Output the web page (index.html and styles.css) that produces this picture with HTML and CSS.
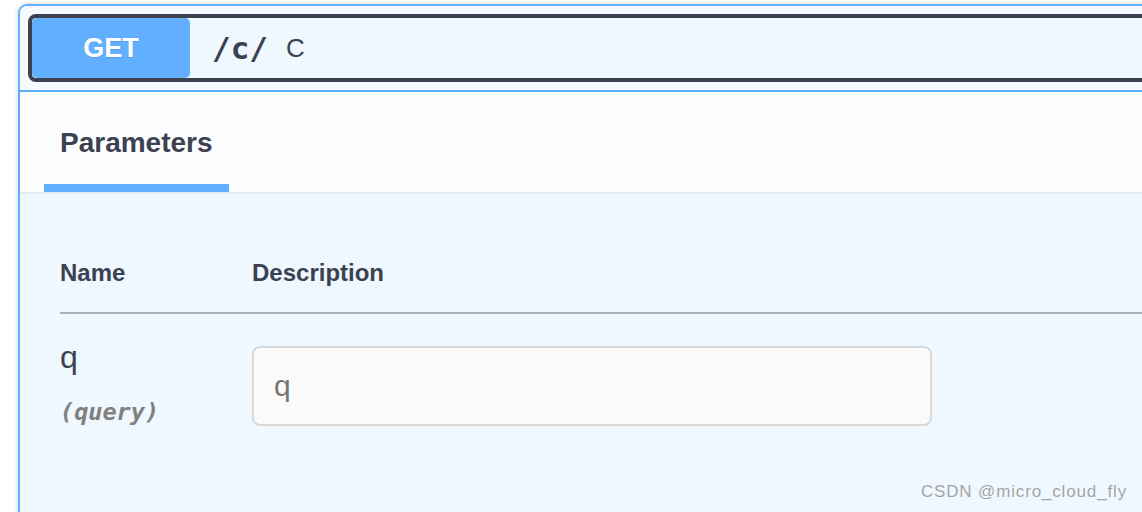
FILE: index.html
```html
<!DOCTYPE html>
<html lang="en">
<head>
<meta charset="utf-8">
<title>GET /c/</title>
<link rel="stylesheet" href="styles.css">
</head>
<body>
<div class="page">
  <div class="opblock">
    <div class="summary">
      <div class="summary-inner">
        <span class="method">GET</span>
        <span class="path">/c/</span>
        <span class="desc">C</span>
      </div>
    </div>
    <div class="section-header">
      <div class="tab"><h4 class="tab-title">Parameters</h4></div>
    </div>
    <div class="params">
      <div class="row row-head">
        <div class="col-name">Name</div>
        <div class="col-desc">Description</div>
      </div>
      <div class="row row-param">
        <div class="col-name">
          <div class="param-name">q</div>
          <div class="param-in">(query)</div>
        </div>
        <div class="col-desc col-input">
          <input class="param-input" type="text" placeholder="q">
        </div>
      </div>
    </div>
  </div>
  <div class="watermark">CSDN @micro_cloud_fly</div>
</div>
</body>
</html>
```

FILE: styles.css
```css
html, body {
  margin: 0;
  padding: 0;
  overflow: hidden;
  background: #ffffff;
  width: 1142px;
  height: 512px;
}

.page {
  position: relative;
  width: 1142px;
  height: 512px;
  overflow: hidden;
  padding: 4px 0 0 18px;
  box-sizing: border-box;
  font-family: "Liberation Sans", Arial, sans-serif;
  color: #3b4151;
}

.opblock {
  width: 1200px;
  min-height: 620px;
  border: 2px solid #61affe;
  border-radius: 9px;
  background: #eff7ff;
  box-shadow: 0 0 5px rgba(0, 0, 0, 0.18);
  box-sizing: border-box;
}

.summary {
  padding: 8px;
  background: #f6faff;
  border-bottom: 2px solid #61affe;
  border-radius: 7px 7px 0 0;
}

.summary-inner {
  display: flex;
  align-items: center;
  border: 4px solid #3b4151;
  border-radius: 8px;
  background: #eff7ff;
}

.method {
  display: flex;
  align-items: center;
  justify-content: center;
  width: 158px;
  height: 60px;
  background: #61affe;
  color: #ffffff;
  font-weight: bold;
  font-size: 27px;
  border-radius: 5px;
  text-shadow: 0 1px 0 rgba(0, 0, 0, 0.1);
}

.path {
  margin-left: 22px;
  font-family: "DejaVu Sans Mono", "Liberation Mono", monospace;
  font-weight: bold;
  font-size: 31px;
  color: #3b4151;
}

.desc {
  margin-left: 18px;
  font-size: 26px;
  color: #3b4151;
}

.section-header {
  padding: 37px 0 0 24px;
  background: #fbfdff;
  box-shadow: 0 1px 3px rgba(0, 0, 0, 0.1);
  position: relative;
}

.tab {
  display: inline-block;
  padding: 0 16px 27px;
  border-bottom: 8px solid #61affe;
}

.tab-title {
  margin: 0;
  font-size: 28px;
  line-height: 28px;
  font-weight: bold;
  color: #3b4151;
}

.params {
  padding: 69px 0 0 40px;
}

.row {
  display: flex;
  align-items: flex-start;
}

.col-name {
  width: 192px;
  flex: none;
}

.col-desc {
  flex: 1;
}

.row-head {
  font-size: 24px;
  line-height: 24px;
  font-weight: bold;
  padding-bottom: 27px;
  border-bottom: 2px solid #aab0ba;
}

.row-param {
  padding-top: 27px;
}

.param-name {
  font-size: 32px;
  line-height: 32px;
  color: #3b4151;
}

.param-in {
  margin-top: 28px;
  font-family: "DejaVu Sans Mono", "Liberation Mono", monospace;
  font-style: italic;
  font-weight: bold;
  font-size: 23.5px;
  line-height: 23px;
  color: #808080;
}

.col-input {
  padding-top: 5px;
}

.param-input {
  display: block;
  width: 680px;
  height: 80px;
  box-sizing: border-box;
  margin: 0;
  padding: 0 20px;
  border: 2px solid #d9d9d9;
  border-radius: 8px;
  background: #fafafa;
  font-family: "Liberation Sans", Arial, sans-serif;
  font-size: 30px;
  color: #3b4151;
  outline: none;
}

.param-input::placeholder {
  color: #757575;
}

.watermark {
  position: absolute;
  top: 483px;
  right: 15px;
  font-family: "Liberation Sans", Arial, sans-serif;
  font-size: 17px;
  line-height: 17px;
  letter-spacing: 0.85px;
  color: #a3a3a3;
  text-shadow: 0 0 1px #ffffff;
}
```
